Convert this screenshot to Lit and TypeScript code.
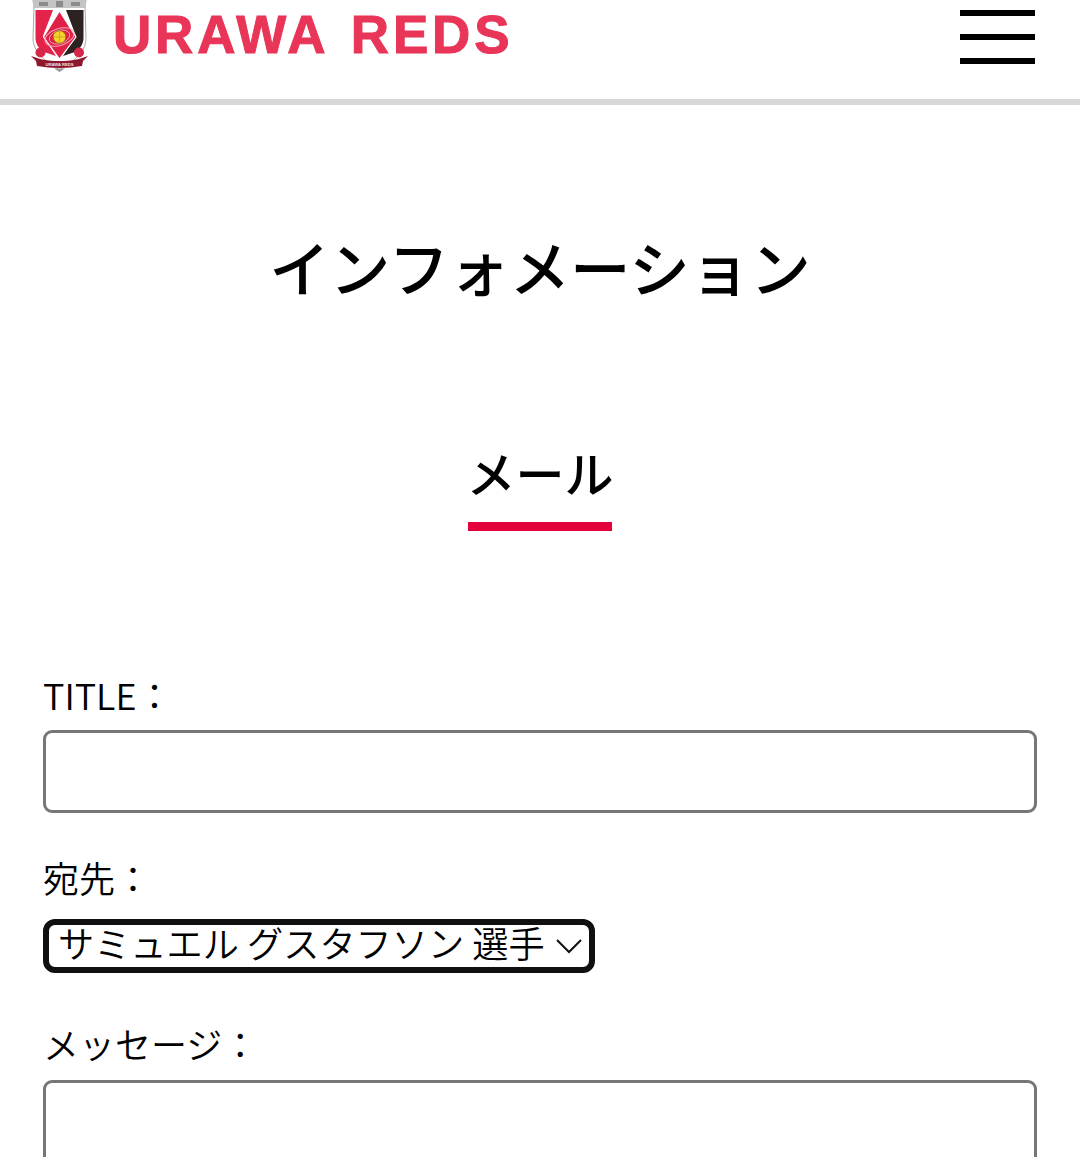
import { LitElement, html, css } from "lit";
import { customElement } from "lit/decorators.js";

@customElement("app-root")
export class AppRoot extends LitElement {
  static styles = css`
    :host { display: block; height: 1157px; overflow: hidden; background: #fff; color: #000;
      font-family: "Noto Sans CJK JP", "Noto Sans", sans-serif; }
    header { height: 99px; border-bottom: 6px solid #d8d8d8; display: flex; align-items: flex-start; justify-content: space-between; padding: 0 45px 0 30px; }
    .brand { display: flex; align-items: flex-start; gap: 24px; }
    .crest { width: 59px; height: 72px; display: block; }
    .word { font-family: "Liberation Sans", sans-serif; font-weight: 700; font-size: 53px; line-height: 70px; color: #e83558; letter-spacing: 3.8px; word-spacing: 5px; white-space: nowrap; -webkit-text-stroke: 1px #e83558; }
    .burger { width: 75px; padding-top: 10px; display: flex; flex-direction: column; gap: 18px; }
    .burger i { display: block; height: 6px; background: #000; }
    h1 { margin: 0; padding-top: 122px; text-align: center; font-size: 60.5px; line-height: 78px; font-weight: 500; }
    .sub { display: flex; justify-content: center; padding-top: 132px; }
    h2 { margin: 0; width: 144px; display: flex; justify-content: center; white-space: nowrap; font-size: 49px; line-height: 70px; font-weight: 500; border-bottom: 9px solid #e4003a; padding-bottom: 15px; }
    form { padding: 137px 43px 0; display: flex; flex-direction: column; }
    label { font-size: 36px; line-height: 52px; display: block; font-weight: 350; }
    .input { display: block; box-sizing: border-box; width: 100%; height: 83px; margin-top: 10px; border: 3px solid #767676; border-radius: 9px; background: #fff; }
    .gap1 { margin-top: 38px; }
    .select { box-sizing: border-box; align-self: flex-start; width: 552px; height: 54px; margin-top: 16px; border: 6px solid #101010; border-radius: 12px; display: flex; align-items: center; justify-content: space-between; padding: 0 6px 9px 9px; font-size: 36.2px; line-height: 42px; white-space: nowrap; font-weight: 350; }
    .select svg { width: 28px; height: 16px; display: block; margin-top: 9px; }
    .gap2 { margin-top: 44px; }
    .input.tall { height: 200px; margin-top: 11px; }
  `;

  render() {
    return html`
      <header>
        <div class="brand">
          <svg class="crest" viewBox="0 0 59 72">
            <path d="M3 0h53l-1 8 1 30c0 13-10 22-26.500 32C13 60 3 51 3 38L4 8z" fill="#fff" stroke="#a8a8a8" stroke-width="1"/>
            <rect x="3" y="0" width="53" height="8" fill="#c4c4c4"/>
            <path d="M9 2h9v4H9zM26 1h7v6h-7zM41 2h9v4h-9z" fill="#666" opacity=".6"/>
            <path d="M5.500 10H23L13 36l13 20-12-4c-5-3-8.500-8-8.500-14z" fill="#e4234a"/>
            <path d="M53.500 10H36l10 26-13 20 12-4c5-3 8.500-8 8.500-14z" fill="#2a2322"/>
            <path d="M29.500 11L46 37 29.500 59 13.500 37z" fill="#df2148" stroke="#fff" stroke-width="1.200"/>
            <ellipse cx="29.500" cy="37" rx="15" ry="8.500" fill="none" stroke="#f6a8b8" stroke-width="1" transform="rotate(-18 29.500 37)"/>
            <ellipse cx="29.500" cy="37" rx="10.500" ry="6.500" fill="none" stroke="#f6a8b8" stroke-width=".8" transform="rotate(-18 29.500 37)"/>
            <circle cx="29.500" cy="37" r="6.300" fill="#f3d22c" stroke="#8a6a12" stroke-width=".7"/>
            <path d="M23.500 37h12M29.500 31v12" stroke="#b8961e" stroke-width=".6"/>
            <circle cx="10.500" cy="52.500" r="5" fill="#d8264b"/>
            <circle cx="49" cy="52.500" r="5" fill="#d8264b"/>
            <path d="M1 56c8 3 16 5 28.500 5S50 59 58 56l-5 5-1 5c-8 1-14 2-22.500 2S15 67 7 66l-1-5z" fill="#8e1730"/>
            <text x="29.500" y="66" text-anchor="middle" font-family="Liberation Sans" font-size="4.200" font-weight="700" fill="#f3e2e2">URAWA REDS</text>
            <path d="M24 68.500h11l-5.500 3.500z" fill="#999"/>
          </svg>
          <div class="word">URAWA REDS</div>
        </div>
        <div class="burger"><i></i><i></i><i></i></div>
      </header>
      <h1>インフォメーション</h1>
      <div class="sub"><h2>メール</h2></div>
      <form>
        <label>TITLE：</label>
        <div class="input"></div>
        <label class="gap1">宛先：</label>
        <div class="select">
          <span>サミュエル グスタフソン 選手</span>
          <svg viewBox="0 0 28 16"><path d="M2 2l12 12L26 2" fill="none" stroke="#111" stroke-width="2"/></svg>
        </div>
        <label class="gap2">メッセージ：</label>
        <div class="input tall"></div>
      </form>
    `;
  }
}
